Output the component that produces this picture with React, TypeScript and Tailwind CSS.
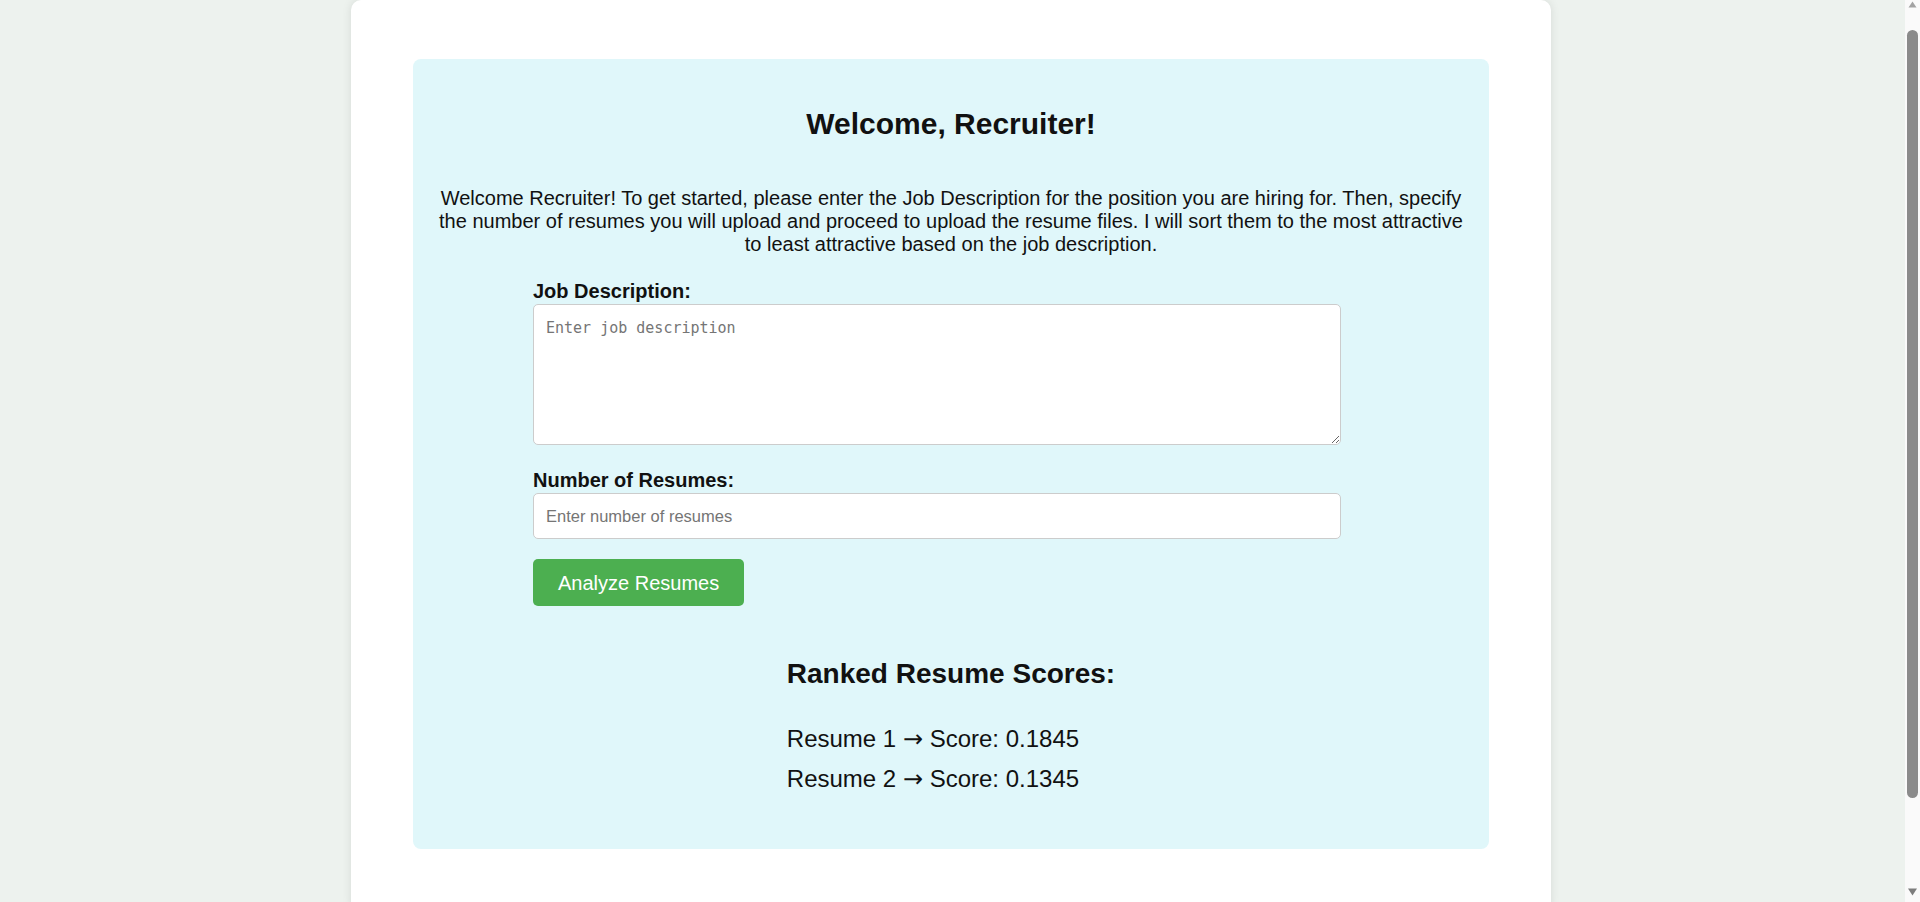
const scores = [
  { name: "Resume 1", score: 0.1845 },
  { name: "Resume 2", score: 0.1345 },
];

function ScrollTrack() {
  return (
    <div className="flex w-[15px] shrink-0 flex-col bg-[#fafafa]">
      <svg width="15" height="12" viewBox="0 0 15 12" className="shrink-0">
        <path d="M3.5 7.5 L7.5 1.5 L11.5 7.5 Z" fill="#a3a3a3" />
      </svg>
      <div className="mx-[2px] mt-[18px] h-[768px] shrink-0 rounded-full bg-[#8b8b8b]" />
      <div className="flex-1" />
      <svg width="15" height="15" viewBox="0 0 15 15" className="shrink-0">
        <path d="M3 1.5 L12 1.5 L7.5 8.5 Z" fill="#7d7d7d" />
      </svg>
    </div>
  );
}

export default function App() {
  return (
    <div className="flex h-screen bg-[#edf2ee] font-['Liberation_Sans',Arial,sans-serif] text-[#111]">
      <div className="flex-1 overflow-hidden pr-[3px]">
        <div className="mx-auto w-[1200px] rounded-[10px] bg-white px-[62px] pt-[59px] pb-[62px] shadow-[0_0_10px_rgba(0,0,0,0.1)]">
          <div className="rounded-[8px] bg-[#e0f7fa] px-5 pt-[48px] pb-[56px]">
            <h2 className="text-center text-[30px] leading-[34px] font-bold">Welcome, Recruiter!</h2>
            <p className="mt-[46px] text-center text-[20px] leading-[23px]">
              Welcome Recruiter! To get started, please enter the Job Description for the position you are hiring
              for. Then, specify the number of resumes you will upload and proceed to upload the resume files. I will
              sort them to the most attractive to least attractive based on the job description.
            </p>

            <form className="mt-[24px] ml-[100px] w-[808px]" onSubmit={(e) => e.preventDefault()}>
              <label className="mb-[1px] block text-[20px] leading-[23px] font-bold">Job Description:</label>
              <textarea
                placeholder="Enter job description"
                className="block h-[141px] w-full rounded-[5px] border border-[#ccc] bg-white p-3 font-['DejaVu_Sans_Mono',monospace] text-[15px] placeholder:text-[#757575] outline-none"
              />

              <label className="mt-[24px] mb-[1px] block text-[20px] leading-[23px] font-bold">
                Number of Resumes:
              </label>
              <input
                type="number"
                placeholder="Enter number of resumes"
                className="block h-[46px] w-full rounded-[5px] border border-[#ccc] bg-white px-3 text-[16.5px] placeholder:text-[#757575] outline-none"
              />

              <button
                type="submit"
                className="mt-[20px] h-[47px] rounded-[5px] bg-[#4caf50] px-[25px] text-[20px] text-white"
              >
                Analyze Resumes
              </button>
            </form>

            <div className="mt-[52px] flex justify-center">
              <div>
                <h3 className="text-[28px] leading-[32px] font-bold">Ranked Resume Scores:</h3>
                <div className="mt-[35px] flex flex-col gap-[12px]">
                  {scores.map((s) => (
                    <div key={s.name} className="text-[24px] leading-[28px]">
                      {s.name} <span className="font-['DejaVu_Sans',sans-serif]">→</span> Score:{" "}
                      {s.score.toFixed(4)}
                    </div>
                  ))}
                </div>
              </div>
            </div>
          </div>
        </div>
      </div>
      <ScrollTrack />
    </div>
  );
}
